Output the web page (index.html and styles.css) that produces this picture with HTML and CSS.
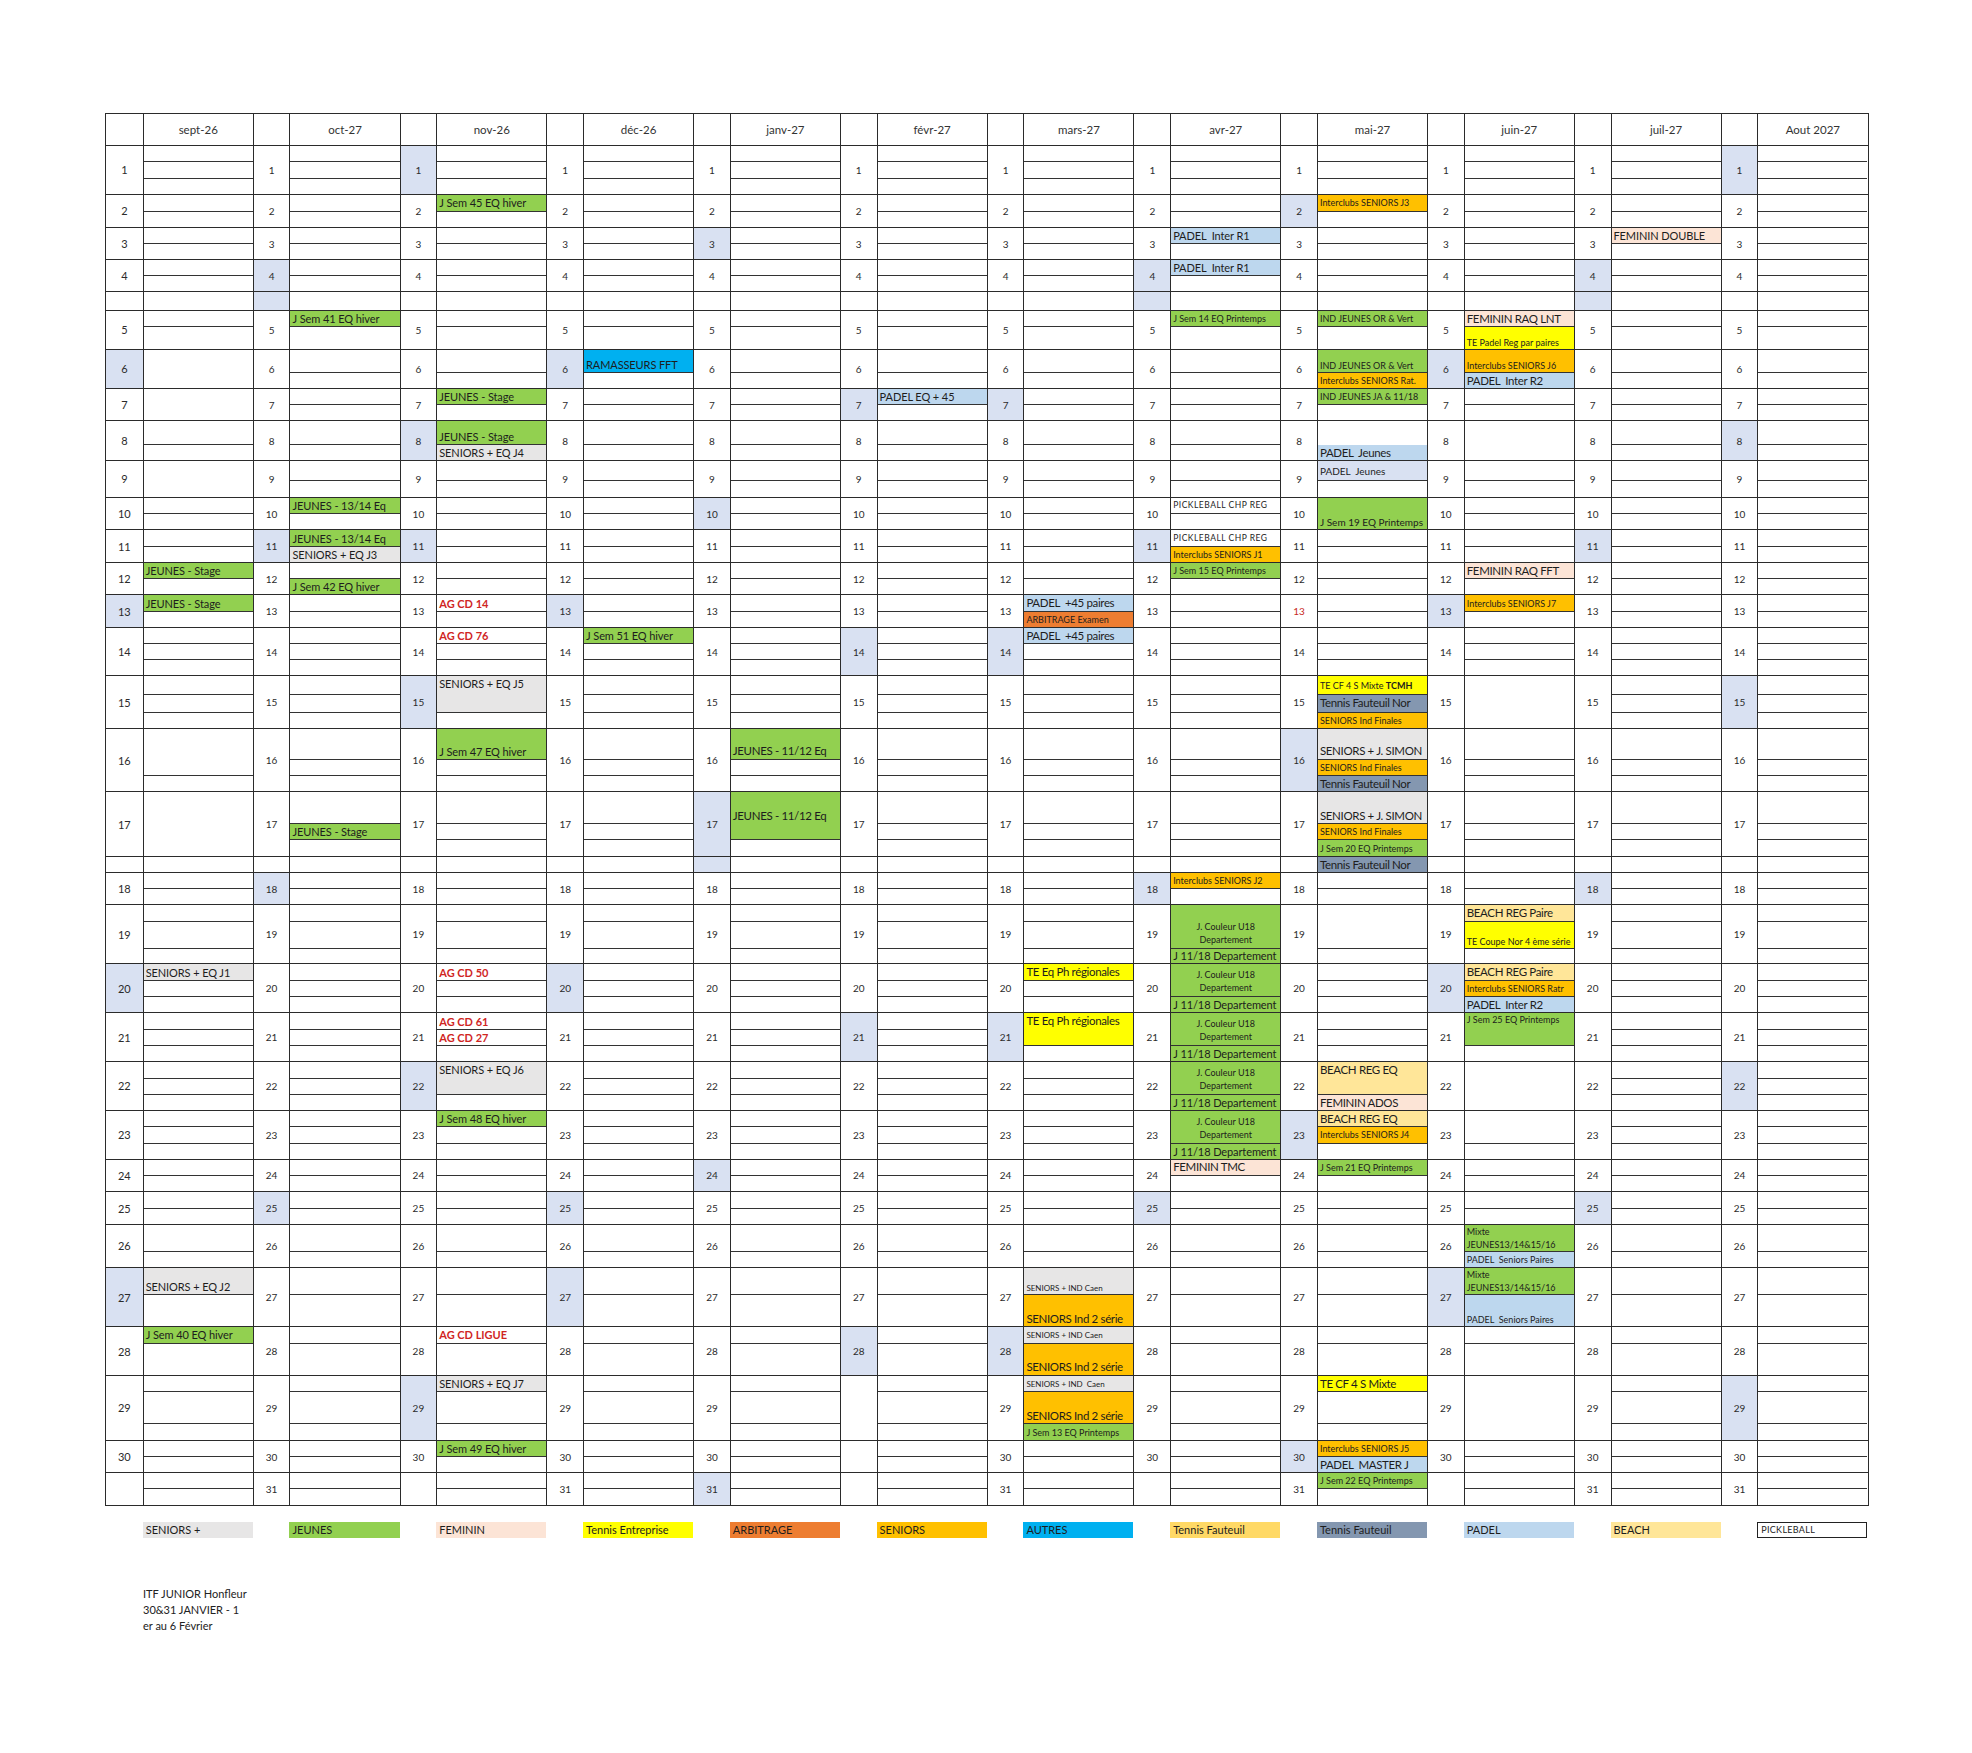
FILE: index.html
```html
<!DOCTYPE html>
<html lang="fr">
<head>
<meta charset="utf-8">
<title>Calendrier 2026-2027</title>
<link rel="stylesheet" href="styles.css">
</head>
<body>
<div class="sheet">
<div class="cal">
<div class="hdr">
<div class="h"></div><div class="h">sept-26</div><div class="h"></div><div class="h">oct-27</div><div class="h"></div><div class="h">nov-26</div><div class="h"></div><div class="h">déc-26</div><div class="h"></div><div class="h">janv-27</div><div class="h"></div><div class="h">févr-27</div><div class="h"></div><div class="h">mars-27</div><div class="h"></div><div class="h">avr-27</div><div class="h"></div><div class="h">mai-27</div><div class="h"></div><div class="h">juin-27</div><div class="h"></div><div class="h">juil-27</div><div class="h"></div><div class="h">Aout 2027</div>
</div>

<div class="row" style="--r:16.3px 16.3px 15px">
<div class="d">1</div><div class="e"><span></span><span></span><span></span></div>
<div class="d">1</div><div class="e"><span></span><span></span><span></span></div>
<div class="d su">1</div><div class="e"><span></span><span></span><span></span></div>
<div class="d">1</div><div class="e"><span></span><span></span><span></span></div>
<div class="d">1</div><div class="e"><span></span><span></span><span></span></div>
<div class="d">1</div><div class="e"><span></span><span></span><span></span></div>
<div class="d">1</div><div class="e"><span></span><span></span><span></span></div>
<div class="d">1</div><div class="e"><span></span><span></span><span></span></div>
<div class="d">1</div><div class="e"><span></span><span></span><span></span></div>
<div class="d">1</div><div class="e"><span></span><span></span><span></span></div>
<div class="d">1</div><div class="e"><span></span><span></span><span></span></div>
<div class="d su">1</div><div class="e"><span></span><span></span><span></span></div>
</div>

<div class="row" style="--r:17px 15px">
<div class="d">2</div><div class="e"><span></span><span></span></div>
<div class="d">2</div><div class="e"><span></span><span></span></div>
<div class="d">2</div><div class="e"><span class="jn">J Sem 45 EQ hiver</span><span></span></div>
<div class="d">2</div><div class="e"><span></span><span></span></div>
<div class="d">2</div><div class="e"><span></span><span></span></div>
<div class="d">2</div><div class="e"><span></span><span></span></div>
<div class="d">2</div><div class="e"><span></span><span></span></div>
<div class="d">2</div><div class="e"><span></span><span></span></div>
<div class="d su">2</div><div class="e"><span class="se sm">Interclubs SENIORS J3</span><span></span></div>
<div class="d">2</div><div class="e"><span></span><span></span></div>
<div class="d">2</div><div class="e"><span></span><span></span></div>
<div class="d">2</div><div class="e"><span></span><span></span></div>
</div>

<div class="row" style="--r:16.4px 15.3px">
<div class="d">3</div><div class="e"><span></span><span></span></div>
<div class="d">3</div><div class="e"><span></span><span></span></div>
<div class="d">3</div><div class="e"><span></span><span></span></div>
<div class="d">3</div><div class="e"><span></span><span></span></div>
<div class="d su">3</div><div class="e"><span></span><span></span></div>
<div class="d">3</div><div class="e"><span></span><span></span></div>
<div class="d">3</div><div class="e"><span></span><span></span></div>
<div class="d">3</div><div class="e"><span class="pa">PADEL&nbsp; Inter R1</span><span></span></div>
<div class="d">3</div><div class="e"><span></span><span></span></div>
<div class="d">3</div><div class="e"><span></span><span></span></div>
<div class="d">3</div><div class="e"><span class="fe">FEMININ DOUBLE</span><span></span></div>
<div class="d">3</div><div class="e"><span></span><span></span></div>
</div>

<div class="row" style="--r:15.7px 15.3px">
<div class="d">4</div><div class="e"><span></span><span></span></div>
<div class="d su">4</div><div class="e"><span></span><span></span></div>
<div class="d">4</div><div class="e"><span></span><span></span></div>
<div class="d">4</div><div class="e"><span></span><span></span></div>
<div class="d">4</div><div class="e"><span></span><span></span></div>
<div class="d">4</div><div class="e"><span></span><span></span></div>
<div class="d">4</div><div class="e"><span></span><span></span></div>
<div class="d su">4</div><div class="e"><span class="pa">PADEL&nbsp; Inter R1</span><span></span></div>
<div class="d">4</div><div class="e"><span></span><span></span></div>
<div class="d">4</div><div class="e"><span></span><span></span></div>
<div class="d su">4</div><div class="e"><span></span><span></span></div>
<div class="d">4</div><div class="e"><span></span><span></span></div>
</div>

<div class="row" style="--r:17.7px">
<div class="d"></div><div class="e"></div>
<div class="d su"></div><div class="e"></div>
<div class="d"></div><div class="e"></div>
<div class="d"></div><div class="e"></div>
<div class="d"></div><div class="e"></div>
<div class="d"></div><div class="e"></div>
<div class="d"></div><div class="e"></div>
<div class="d su"></div><div class="e"></div>
<div class="d"></div><div class="e"></div>
<div class="d"></div><div class="e"></div>
<div class="d su"></div><div class="e"></div>
<div class="d"></div><div class="e"></div>
</div>

<div class="row" style="--r:16.3px 21.3px">
<div class="d">5</div><div class="e"><span></span><span></span></div>
<div class="d">5</div><div class="e"><span class="jn">J Sem 41 EQ hiver</span><span></span></div>
<div class="d">5</div><div class="e"><span></span><span></span></div>
<div class="d">5</div><div class="e"><span></span><span></span></div>
<div class="d">5</div><div class="e"><span></span><span></span></div>
<div class="d">5</div><div class="e"><span></span><span></span></div>
<div class="d">5</div><div class="e"><span></span><span></span></div>
<div class="d">5</div><div class="e"><span class="jn sm">J Sem 14 EQ Printemps</span><span></span></div>
<div class="d">5</div><div class="e"><span class="jn sm">IND JEUNES OR &amp; Vert</span><span></span></div>
<div class="d">5</div><div class="e"><span class="fe lg">FEMININ RAQ LNT</span><span class="te sm bot">TE Padel Reg par paires</span></div>
<div class="d">5</div><div class="e"><span></span><span></span></div>
<div class="d">5</div><div class="e"><span></span><span></span></div>
</div>

<div class="row" style="--r:23.4px 15px">
<div class="d su">6</div><div class="e"><span class="nb"></span><span></span></div>
<div class="d">6</div><div class="e"><span></span><span></span></div>
<div class="d">6</div><div class="e"><span></span><span></span></div>
<div class="d su">6</div><div class="e"><span class="au bot">RAMASSEURS FFT</span><span></span></div>
<div class="d">6</div><div class="e"><span></span><span></span></div>
<div class="d">6</div><div class="e"><span></span><span></span></div>
<div class="d">6</div><div class="e"><span></span><span></span></div>
<div class="d">6</div><div class="e"><span></span><span></span></div>
<div class="d">6</div><div class="e"><span class="jn sm bot">IND JEUNES OR &amp; Vert</span><span class="se sm">Interclubs SENIORS Rat.</span></div>
<div class="d su">6</div><div class="e"><span class="se sm bot">Interclubs SENIORS J6</span><span class="pa lg">PADEL&nbsp; Inter R2</span></div>
<div class="d">6</div><div class="e"><span></span><span></span></div>
<div class="d">6</div><div class="e"><span></span><span></span></div>
</div>

<div class="row" style="--r:16.3px 15px">
<div class="d">7</div><div class="e"><span class="nb"></span><span></span></div>
<div class="d">7</div><div class="e"><span></span><span></span></div>
<div class="d">7</div><div class="e"><span class="jn">JEUNES - Stage</span><span></span></div>
<div class="d">7</div><div class="e"><span></span><span></span></div>
<div class="d">7</div><div class="e"><span></span><span></span></div>
<div class="d su">7</div><div class="e"><span class="pa">PADEL EQ + 45</span><span></span></div>
<div class="d su">7</div><div class="e"><span></span><span></span></div>
<div class="d">7</div><div class="e"><span></span><span></span></div>
<div class="d">7</div><div class="e"><span class="jn sm">IND JEUNES JA &amp; 11/18</span><span></span></div>
<div class="d">7</div><div class="e"><span></span><span></span></div>
<div class="d">7</div><div class="e"><span></span><span></span></div>
<div class="d">7</div><div class="e"><span></span><span></span></div>
</div>

<div class="row" style="--r:23.7px 15px">
<div class="d">8</div><div class="e"><span></span><span></span></div>
<div class="d">8</div><div class="e"><span></span><span></span></div>
<div class="d su">8</div><div class="e"><span class="jn bot">JEUNES - Stage</span><span class="sp">SENIORS + EQ J4</span></div>
<div class="d">8</div><div class="e"><span></span><span></span></div>
<div class="d">8</div><div class="e"><span></span><span></span></div>
<div class="d">8</div><div class="e"><span></span><span></span></div>
<div class="d">8</div><div class="e"><span></span><span></span></div>
<div class="d">8</div><div class="e"><span></span><span></span></div>
<div class="d">8</div><div class="e"><span class="nb"></span><span class="pa lg">PADEL&nbsp; Jeunes</span></div>
<div class="d">8</div><div class="e"><span class="nb"></span><span></span></div>
<div class="d">8</div><div class="e"><span></span><span></span></div>
<div class="d su">8</div><div class="e"><span></span><span></span></div>
</div>

<div class="row" style="--r:20px 15.6px">
<div class="d">9</div><div class="e"><span class="nb"></span><span></span></div>
<div class="d">9</div><div class="e"><span></span><span></span></div>
<div class="d">9</div><div class="e"><span></span><span></span></div>
<div class="d">9</div><div class="e"><span></span><span></span></div>
<div class="d">9</div><div class="e"><span></span><span></span></div>
<div class="d">9</div><div class="e"><span></span><span></span></div>
<div class="d">9</div><div class="e"><span></span><span></span></div>
<div class="d">9</div><div class="e"><span></span><span></span></div>
<div class="d">9</div><div class="e"><span class="pl md">PADEL&nbsp; Jeunes</span><span></span></div>
<div class="d">9</div><div class="e"><span></span><span></span></div>
<div class="d">9</div><div class="e"><span></span><span></span></div>
<div class="d">9</div><div class="e"><span></span><span></span></div>
</div>

<div class="row" style="--r:16.4px 15.3px">
<div class="d">10</div><div class="e"><span></span><span></span></div>
<div class="d">10</div><div class="e"><span class="jn">JEUNES - 13/14 Eq</span><span></span></div>
<div class="d">10</div><div class="e"><span></span><span></span></div>
<div class="d">10</div><div class="e"><span></span><span></span></div>
<div class="d su">10</div><div class="e"><span></span><span></span></div>
<div class="d">10</div><div class="e"><span></span><span></span></div>
<div class="d">10</div><div class="e"><span></span><span></span></div>
<div class="d">10</div><div class="e"><span class="pk">PICKLEBALL CHP REG</span><span></span></div>
<div class="d">10</div><div class="e"><span class="jn md s2 bot">J Sem 19 EQ Printemps</span></div>
<div class="d">10</div><div class="e"><span></span><span></span></div>
<div class="d">10</div><div class="e"><span></span><span></span></div>
<div class="d">10</div><div class="e"><span></span><span></span></div>
</div>

<div class="row" style="--r:16.3px 15px">
<div class="d">11</div><div class="e"><span></span><span></span></div>
<div class="d su">11</div><div class="e"><span class="jn">JEUNES - 13/14 Eq</span><span class="sp">SENIORS + EQ J3</span></div>
<div class="d su">11</div><div class="e"><span></span><span></span></div>
<div class="d">11</div><div class="e"><span></span><span></span></div>
<div class="d">11</div><div class="e"><span></span><span></span></div>
<div class="d">11</div><div class="e"><span></span><span></span></div>
<div class="d">11</div><div class="e"><span></span><span></span></div>
<div class="d su">11</div><div class="e"><span class="pk">PICKLEBALL CHP REG</span><span class="se sm">Interclubs SENIORS J1</span></div>
<div class="d">11</div><div class="e"><span></span><span></span></div>
<div class="d">11</div><div class="e"><span></span><span></span></div>
<div class="d su">11</div><div class="e"><span></span><span></span></div>
<div class="d">11</div><div class="e"><span></span><span></span></div>
</div>

<div class="row" style="--r:16.4px 15.3px">
<div class="d">12</div><div class="e"><span class="jn">JEUNES - Stage</span><span></span></div>
<div class="d">12</div><div class="e"><span></span><span class="jn">J Sem 42 EQ hiver</span></div>
<div class="d">12</div><div class="e"><span></span><span></span></div>
<div class="d">12</div><div class="e"><span></span><span></span></div>
<div class="d">12</div><div class="e"><span></span><span></span></div>
<div class="d">12</div><div class="e"><span></span><span></span></div>
<div class="d">12</div><div class="e"><span></span><span></span></div>
<div class="d">12</div><div class="e"><span class="jn sm">J Sem 15 EQ Printemps</span><span></span></div>
<div class="d">12</div><div class="e"><span></span><span></span></div>
<div class="d">12</div><div class="e"><span class="fe lg">FEMININ RAQ FFT</span><span></span></div>
<div class="d">12</div><div class="e"><span></span><span></span></div>
<div class="d">12</div><div class="e"><span></span><span></span></div>
</div>

<div class="row" style="--r:16.3px 15.4px">
<div class="d su">13</div><div class="e"><span class="jn">JEUNES - Stage</span><span></span></div>
<div class="d">13</div><div class="e"><span></span><span></span></div>
<div class="d">13</div><div class="e"><span class="ag">AG CD 14</span><span></span></div>
<div class="d su">13</div><div class="e"><span></span><span></span></div>
<div class="d">13</div><div class="e"><span></span><span></span></div>
<div class="d">13</div><div class="e"><span></span><span></span></div>
<div class="d">13</div><div class="e"><span class="pa lg">PADEL&nbsp; +45 paires</span><span class="ar sm">ARBITRAGE Examen</span></div>
<div class="d">13</div><div class="e"><span></span><span></span></div>
<div class="d red">13</div><div class="e"><span></span><span></span></div>
<div class="d su">13</div><div class="e"><span class="se sm">Interclubs SENIORS J7</span><span></span></div>
<div class="d">13</div><div class="e"><span></span><span></span></div>
<div class="d">13</div><div class="e"><span></span><span></span></div>
</div>

<div class="row" style="--r:16px 16.3px 15px">
<div class="d">14</div><div class="e"><span></span><span></span><span></span></div>
<div class="d">14</div><div class="e"><span></span><span></span><span></span></div>
<div class="d">14</div><div class="e"><span class="ag">AG CD 76</span><span></span><span></span></div>
<div class="d">14</div><div class="e"><span class="jn">J Sem 51 EQ hiver</span><span></span><span></span></div>
<div class="d">14</div><div class="e"><span></span><span></span><span></span></div>
<div class="d su">14</div><div class="e"><span></span><span></span><span></span></div>
<div class="d su">14</div><div class="e"><span class="pa lg">PADEL&nbsp; +45 paires</span><span></span><span></span></div>
<div class="d">14</div><div class="e"><span></span><span></span><span></span></div>
<div class="d">14</div><div class="e"><span></span><span></span><span></span></div>
<div class="d">14</div><div class="e"><span></span><span></span><span></span></div>
<div class="d">14</div><div class="e"><span></span><span></span><span></span></div>
<div class="d">14</div><div class="e"><span></span><span></span><span></span></div>
</div>

<div class="row" style="--r:18.3px 18px 15.7px">
<div class="d">15</div><div class="e"><span></span><span></span><span></span></div>
<div class="d">15</div><div class="e"><span></span><span></span><span></span></div>
<div class="d su">15</div><div class="e"><span class="sp s2 top">SENIORS + EQ J5</span><span></span></div>
<div class="d">15</div><div class="e"><span></span><span></span><span></span></div>
<div class="d">15</div><div class="e"><span></span><span></span><span></span></div>
<div class="d">15</div><div class="e"><span></span><span></span><span></span></div>
<div class="d">15</div><div class="e"><span></span><span></span><span></span></div>
<div class="d">15</div><div class="e"><span></span><span></span><span></span></div>
<div class="d">15</div><div class="e"><span class="te sm">TE CF 4 S Mixte&nbsp;<b>TCMH</b></span><span class="tfn lg">Tennis Fauteuil Nor</span><span class="se sm">SENIORS Ind Finales</span></div>
<div class="d">15</div><div class="e"><span class="nb"></span><span class="nb"></span><span></span></div>
<div class="d">15</div><div class="e"><span></span><span></span><span></span></div>
<div class="d su">15</div><div class="e"><span></span><span></span><span></span></div>
</div>

<div class="row" style="--r:30.3px 16px 15.4px">
<div class="d">16</div><div class="e"><span class="nb"></span><span></span><span></span></div>
<div class="d">16</div><div class="e"><span></span><span></span><span></span></div>
<div class="d">16</div><div class="e"><span class="jn bot">J Sem 47 EQ hiver</span><span></span><span></span></div>
<div class="d">16</div><div class="e"><span></span><span></span><span></span></div>
<div class="d">16</div><div class="e"><span class="jn lg bot">JEUNES - 11/12 Eq</span><span></span><span></span></div>
<div class="d">16</div><div class="e"><span></span><span></span><span></span></div>
<div class="d">16</div><div class="e"><span></span><span></span><span></span></div>
<div class="d">16</div><div class="e"><span></span><span></span><span></span></div>
<div class="d su">16</div><div class="e"><span class="sp lg bot">SENIORS + J. SIMON</span><span class="se sm">SENIORS Ind Finales</span><span class="tfn lg">Tennis Fauteuil Nor</span></div>
<div class="d">16</div><div class="e"><span></span><span></span><span></span></div>
<div class="d">16</div><div class="e"><span></span><span></span><span></span></div>
<div class="d">16</div><div class="e"><span></span><span></span><span></span></div>
</div>

<div class="row" style="--r:32.3px 16px 15.7px">
<div class="d">17</div><div class="e"><span class="nb"></span><span class="nb"></span><span></span></div>
<div class="d">17</div><div class="e"><span></span><span class="jn">JEUNES - Stage</span><span></span></div>
<div class="d">17</div><div class="e"><span></span><span></span><span></span></div>
<div class="d">17</div><div class="e"><span></span><span></span><span></span></div>
<div class="d su">17</div><div class="e"><span class="jn lg s2">JEUNES - 11/12 Eq</span><span></span></div>
<div class="d">17</div><div class="e"><span></span><span></span><span></span></div>
<div class="d">17</div><div class="e"><span></span><span></span><span></span></div>
<div class="d">17</div><div class="e"><span></span><span></span><span></span></div>
<div class="d">17</div><div class="e"><span class="sp lg bot">SENIORS + J. SIMON</span><span class="se sm">SENIORS Ind Finales</span><span class="jn sm">J Sem 20 EQ Printemps</span></div>
<div class="d">17</div><div class="e"><span></span><span></span><span></span></div>
<div class="d">17</div><div class="e"><span></span><span></span><span></span></div>
<div class="d">17</div><div class="e"><span></span><span></span><span></span></div>
</div>

<div class="row" style="--r:15px">
<div class="d"></div><div class="e"></div>
<div class="d"></div><div class="e"></div>
<div class="d"></div><div class="e"></div>
<div class="d"></div><div class="e"></div>
<div class="d su"></div><div class="e"></div>
<div class="d"></div><div class="e"></div>
<div class="d"></div><div class="e"></div>
<div class="d"></div><div class="e"></div>
<div class="d"></div><div class="e"><span class="tfn lg">Tennis Fauteuil Nor</span></div>
<div class="d"></div><div class="e"></div>
<div class="d"></div><div class="e"></div>
<div class="d"></div><div class="e"></div>
</div>

<div class="row" style="--r:16.3px 15px">
<div class="d">18</div><div class="e"><span></span><span></span></div>
<div class="d su">18</div><div class="e"><span></span><span></span></div>
<div class="d">18</div><div class="e"><span></span><span></span></div>
<div class="d">18</div><div class="e"><span></span><span></span></div>
<div class="d">18</div><div class="e"><span></span><span></span></div>
<div class="d">18</div><div class="e"><span></span><span></span></div>
<div class="d">18</div><div class="e"><span></span><span></span></div>
<div class="d su">18</div><div class="e"><span class="se sm">Interclubs SENIORS J2</span><span></span></div>
<div class="d">18</div><div class="e"><span></span><span></span></div>
<div class="d">18</div><div class="e"><span></span><span></span></div>
<div class="d su">18</div><div class="e"><span></span><span></span></div>
<div class="d">18</div><div class="e"><span></span><span></span></div>
</div>

<div class="row" style="--r:16.3px 27px 14.7px">
<div class="d">19</div><div class="e"><span></span><span></span><span></span></div>
<div class="d">19</div><div class="e"><span></span><span></span><span></span></div>
<div class="d">19</div><div class="e"><span></span><span></span><span></span></div>
<div class="d">19</div><div class="e"><span></span><span></span><span></span></div>
<div class="d">19</div><div class="e"><span></span><span></span><span></span></div>
<div class="d">19</div><div class="e"><span></span><span></span><span></span></div>
<div class="d">19</div><div class="e"><span></span><span></span><span></span></div>
<div class="d">19</div><div class="e"><span class="jn sm s2 two ctr bot">J. Couleur U18<br>Departement</span><span class="jn">J 11/18 Departement</span></div>
<div class="d">19</div><div class="e"><span class="nb"></span><span></span><span></span></div>
<div class="d">19</div><div class="e"><span class="be lg">BEACH REG Paire</span><span class="te sm bot">TE Coupe Nor 4 ème série</span><span></span></div>
<div class="d">19</div><div class="e"><span></span><span></span><span></span></div>
<div class="d">19</div><div class="e"><span></span><span></span><span></span></div>
</div>

<div class="row" style="--r:16.7px 16.3px 15px">
<div class="d su">20</div><div class="e"><span class="sp">SENIORS + EQ J1</span><span></span><span></span></div>
<div class="d">20</div><div class="e"><span></span><span></span><span></span></div>
<div class="d">20</div><div class="e"><span class="ag">AG CD 50</span><span></span><span></span></div>
<div class="d su">20</div><div class="e"><span></span><span></span><span></span></div>
<div class="d">20</div><div class="e"><span></span><span></span><span></span></div>
<div class="d">20</div><div class="e"><span></span><span></span><span></span></div>
<div class="d">20</div><div class="e"><span class="te lg">TE Eq Ph régionales</span><span></span><span></span></div>
<div class="d">20</div><div class="e"><span class="jn sm s2 two ctr bot">J. Couleur U18<br>Departement</span><span class="jn">J 11/18 Departement</span></div>
<div class="d">20</div><div class="e"><span></span><span></span><span></span></div>
<div class="d su">20</div><div class="e"><span class="be lg">BEACH REG Paire</span><span class="se sm">Interclubs SENIORS Ratr</span><span class="pa lg">PADEL&nbsp; Inter R2</span></div>
<div class="d">20</div><div class="e"><span></span><span></span><span></span></div>
<div class="d">20</div><div class="e"><span></span><span></span><span></span></div>
</div>

<div class="row" style="--r:17px 16px 14.7px">
<div class="d">21</div><div class="e"><span></span><span></span><span></span></div>
<div class="d">21</div><div class="e"><span></span><span></span><span></span></div>
<div class="d">21</div><div class="e"><span class="ag">AG CD 61</span><span class="ag">AG CD 27</span><span></span></div>
<div class="d">21</div><div class="e"><span></span><span></span><span></span></div>
<div class="d">21</div><div class="e"><span></span><span></span><span></span></div>
<div class="d su">21</div><div class="e"><span></span><span></span><span></span></div>
<div class="d su">21</div><div class="e"><span class="te lg s2 top">TE Eq Ph régionales</span><span></span></div>
<div class="d">21</div><div class="e"><span class="jn sm s2 two ctr bot">J. Couleur U18<br>Departement</span><span class="jn">J 11/18 Departement</span></div>
<div class="d">21</div><div class="e"><span></span><span></span><span></span></div>
<div class="d">21</div><div class="e"><span class="jn sm s2 top">J Sem 25 EQ Printemps</span><span></span></div>
<div class="d">21</div><div class="e"><span></span><span></span><span></span></div>
<div class="d">21</div><div class="e"><span></span><span></span><span></span></div>
</div>

<div class="row" style="--r:16.6px 16.4px 14.6px">
<div class="d">22</div><div class="e"><span></span><span></span><span></span></div>
<div class="d">22</div><div class="e"><span></span><span></span><span></span></div>
<div class="d su">22</div><div class="e"><span class="sp s2 top">SENIORS + EQ J6</span><span></span></div>
<div class="d">22</div><div class="e"><span></span><span></span><span></span></div>
<div class="d">22</div><div class="e"><span></span><span></span><span></span></div>
<div class="d">22</div><div class="e"><span></span><span></span><span></span></div>
<div class="d">22</div><div class="e"><span></span><span></span><span></span></div>
<div class="d">22</div><div class="e"><span class="jn sm s2 two ctr bot">J. Couleur U18<br>Departement</span><span class="jn">J 11/18 Departement</span></div>
<div class="d">22</div><div class="e"><span class="be lg s2 top">BEACH REG EQ</span><span class="fe lg">FEMININ ADOS</span></div>
<div class="d">22</div><div class="e"><span class="nb"></span><span class="nb"></span><span></span></div>
<div class="d">22</div><div class="e"><span></span><span></span><span></span></div>
<div class="d su">22</div><div class="e"><span></span><span></span><span></span></div>
</div>

<div class="row" style="--r:16.7px 16.3px 15px">
<div class="d">23</div><div class="e"><span></span><span></span><span></span></div>
<div class="d">23</div><div class="e"><span></span><span></span><span></span></div>
<div class="d">23</div><div class="e"><span class="jn">J Sem 48 EQ hiver</span><span></span><span></span></div>
<div class="d">23</div><div class="e"><span></span><span></span><span></span></div>
<div class="d">23</div><div class="e"><span></span><span></span><span></span></div>
<div class="d">23</div><div class="e"><span></span><span></span><span></span></div>
<div class="d">23</div><div class="e"><span></span><span></span><span></span></div>
<div class="d">23</div><div class="e"><span class="jn sm s2 two ctr bot">J. Couleur U18<br>Departement</span><span class="jn">J 11/18 Departement</span></div>
<div class="d su">23</div><div class="e"><span class="be lg">BEACH REG EQ</span><span class="se sm">Interclubs SENIORS J4</span><span></span></div>
<div class="d">23</div><div class="e"><span class="nb"></span><span></span><span></span></div>
<div class="d">23</div><div class="e"><span></span><span></span><span></span></div>
<div class="d">23</div><div class="e"><span></span><span></span><span></span></div>
</div>

<div class="row" style="--r:16.4px 15.3px">
<div class="d">24</div><div class="e"><span></span><span></span></div>
<div class="d">24</div><div class="e"><span></span><span></span></div>
<div class="d">24</div><div class="e"><span></span><span></span></div>
<div class="d">24</div><div class="e"><span></span><span></span></div>
<div class="d su">24</div><div class="e"><span></span><span></span></div>
<div class="d">24</div><div class="e"><span></span><span></span></div>
<div class="d">24</div><div class="e"><span></span><span></span></div>
<div class="d">24</div><div class="e"><span class="fe lg">FEMININ TMC</span><span></span></div>
<div class="d">24</div><div class="e"><span class="jn sm">J Sem 21 EQ Printemps</span><span></span></div>
<div class="d">24</div><div class="e"><span></span><span></span></div>
<div class="d">24</div><div class="e"><span></span><span></span></div>
<div class="d">24</div><div class="e"><span></span><span></span></div>
</div>

<div class="row" style="--r:16.3px 15.4px">
<div class="d">25</div><div class="e"><span></span><span></span></div>
<div class="d su">25</div><div class="e"><span></span><span></span></div>
<div class="d">25</div><div class="e"><span></span><span></span></div>
<div class="d su">25</div><div class="e"><span></span><span></span></div>
<div class="d">25</div><div class="e"><span></span><span></span></div>
<div class="d">25</div><div class="e"><span></span><span></span></div>
<div class="d">25</div><div class="e"><span></span><span></span></div>
<div class="d su">25</div><div class="e"><span></span><span></span></div>
<div class="d">25</div><div class="e"><span></span><span></span></div>
<div class="d">25</div><div class="e"><span></span><span></span></div>
<div class="d su">25</div><div class="e"><span></span><span></span></div>
<div class="d">25</div><div class="e"><span></span><span></span></div>
</div>

<div class="row" style="--r:27px 15px">
<div class="d">26</div><div class="e"><span></span><span></span></div>
<div class="d">26</div><div class="e"><span></span><span></span></div>
<div class="d">26</div><div class="e"><span></span><span></span></div>
<div class="d">26</div><div class="e"><span></span><span></span></div>
<div class="d">26</div><div class="e"><span></span><span></span></div>
<div class="d">26</div><div class="e"><span></span><span></span></div>
<div class="d">26</div><div class="e"><span></span><span></span></div>
<div class="d">26</div><div class="e"><span></span><span></span></div>
<div class="d">26</div><div class="e"><span></span><span></span></div>
<div class="d">26</div><div class="e"><span class="jn sm two">Mixte<br>JEUNES13/14&amp;15/16</span><span class="pa sm">PADEL&nbsp; Seniors Paires</span></div>
<div class="d">26</div><div class="e"><span></span><span></span></div>
<div class="d">26</div><div class="e"><span></span><span></span></div>
</div>

<div class="row" style="--r:27px 31.3px">
<div class="d su">27</div><div class="e"><span class="sp bot">SENIORS + EQ J2</span><span></span></div>
<div class="d">27</div><div class="e"><span></span><span></span></div>
<div class="d">27</div><div class="e"><span></span><span></span></div>
<div class="d su">27</div><div class="e"><span></span><span></span></div>
<div class="d">27</div><div class="e"><span></span><span></span></div>
<div class="d">27</div><div class="e"><span></span><span></span></div>
<div class="d">27</div><div class="e"><span class="sp xs bot">SENIORS + IND Caen</span><span class="se lg bot">SENIORS Ind 2 série</span></div>
<div class="d">27</div><div class="e"><span></span><span></span></div>
<div class="d">27</div><div class="e"><span></span><span></span></div>
<div class="d su">27</div><div class="e"><span class="jn sm two">Mixte<br>JEUNES13/14&amp;15/16</span><span class="pa sm bot">PADEL&nbsp; Seniors Paires</span></div>
<div class="d">27</div><div class="e"><span></span><span></span></div>
<div class="d">27</div><div class="e"><span></span><span></span></div>
</div>

<div class="row" style="--r:16.3px 31.4px">
<div class="d">28</div><div class="e"><span class="jn">J Sem 40 EQ hiver</span><span></span></div>
<div class="d">28</div><div class="e"><span></span><span></span></div>
<div class="d">28</div><div class="e"><span class="ag">AG CD LIGUE</span><span></span></div>
<div class="d">28</div><div class="e"><span></span><span></span></div>
<div class="d">28</div><div class="e"><span></span><span></span></div>
<div class="d su">28</div><div class="e"><span></span><span></span></div>
<div class="d su">28</div><div class="e"><span class="sp xs">SENIORS + IND Caen</span><span class="se lg bot">SENIORS Ind 2 série</span></div>
<div class="d">28</div><div class="e"><span></span><span></span></div>
<div class="d">28</div><div class="e"><span></span><span></span></div>
<div class="d">28</div><div class="e"><span></span><span></span></div>
<div class="d">28</div><div class="e"><span></span><span></span></div>
<div class="d">28</div><div class="e"><span></span><span></span></div>
</div>

<div class="row" style="--r:16.3px 32.3px 15.4px">
<div class="d">29</div><div class="e"><span></span><span></span><span></span></div>
<div class="d">29</div><div class="e"><span></span><span></span><span></span></div>
<div class="d su">29</div><div class="e"><span class="sp">SENIORS + EQ J7</span><span></span><span></span></div>
<div class="d">29</div><div class="e"><span></span><span></span><span></span></div>
<div class="d">29</div><div class="e"><span></span><span></span><span></span></div>
<div class="d"></div><div class="e"><span></span><span></span><span></span></div>
<div class="d">29</div><div class="e"><span class="sp xs">SENIORS + IND&nbsp; Caen</span><span class="se lg bot">SENIORS Ind 2 série</span><span class="jn sm">J Sem 13 EQ Printemps</span></div>
<div class="d">29</div><div class="e"><span></span><span></span><span></span></div>
<div class="d">29</div><div class="e"><span class="te lg">TE CF 4 S Mixte</span><span></span><span></span></div>
<div class="d">29</div><div class="e"><span class="nb"></span><span class="nb"></span><span></span></div>
<div class="d">29</div><div class="e"><span></span><span></span><span></span></div>
<div class="d su">29</div><div class="e"><span></span><span></span><span></span></div>
</div>

<div class="row" style="--r:16.3px 15.3px">
<div class="d">30</div><div class="e"><span></span><span></span></div>
<div class="d">30</div><div class="e"><span></span><span></span></div>
<div class="d">30</div><div class="e"><span class="jn">J Sem 49 EQ hiver</span><span></span></div>
<div class="d">30</div><div class="e"><span></span><span></span></div>
<div class="d">30</div><div class="e"><span></span><span></span></div>
<div class="d"></div><div class="e"><span></span><span></span></div>
<div class="d">30</div><div class="e"><span></span><span></span></div>
<div class="d">30</div><div class="e"><span></span><span></span></div>
<div class="d su">30</div><div class="e"><span class="se sm">Interclubs SENIORS J5</span><span class="pa lg">PADEL&nbsp; MASTER J</span></div>
<div class="d">30</div><div class="e"><span></span><span></span></div>
<div class="d">30</div><div class="e"><span></span><span></span></div>
<div class="d">30</div><div class="e"><span></span><span></span></div>
</div>

<div class="row" style="--r:16px 15.4px">
<div class="d"></div><div class="e"><span></span><span></span></div>
<div class="d">31</div><div class="e"><span></span><span></span></div>
<div class="d"></div><div class="e"><span></span><span></span></div>
<div class="d">31</div><div class="e"><span></span><span></span></div>
<div class="d su">31</div><div class="e"><span></span><span></span></div>
<div class="d"></div><div class="e"><span></span><span></span></div>
<div class="d">31</div><div class="e"><span></span><span></span></div>
<div class="d"></div><div class="e"><span></span><span></span></div>
<div class="d">31</div><div class="e"><span class="jn sm">J Sem 22 EQ Printemps</span><span></span></div>
<div class="d"></div><div class="e"><span></span><span></span></div>
<div class="d">31</div><div class="e"><span></span><span></span></div>
<div class="d">31</div><div class="e"><span></span><span></span></div>
</div>
</div>

<div class="legend">
<div class="key sp">SENIORS +</div>
<div class="key jn">JEUNES</div>
<div class="key fe">FEMININ</div>
<div class="key te">Tennis Entreprise</div>
<div class="key ar">ARBITRAGE</div>
<div class="key se">SENIORS</div>
<div class="key au">AUTRES</div>
<div class="key tf">Tennis Fauteuil</div>
<div class="key tfn">Tennis Fauteuil</div>
<div class="key pa">PADEL</div>
<div class="key be">BEACH</div>
<div class="key pkl">PICKLEBALL</div>
</div>

<div class="note">
<p>ITF JUNIOR Honfleur</p>
<p>30&amp;31 JANVIER - 1</p>
<p>er au 6 Février</p>
</div>
</div>
</body>
</html>
```

FILE: styles.css
```css
* { box-sizing: border-box; }
html, body { margin: 0; background: #ffffff; }
body {
  font-family: Lato, "Liberation Sans", sans-serif;
  color: #1d1d1d;
}
.sheet { padding: 113px 0 0 105px; }

.cal {
  width: 1763.6px;
  border: 1px solid #2b2b2b;
  border-bottom: 0;
}
.hdr, .row {
  display: grid;
  grid-template-columns: repeat(12, 36.7px 110.1px);
  border-bottom: 1px solid #2b2b2b;
}
.hdr { height: 32.2px; }
.h {
  border-left: 1px solid #2b2b2b;
  display: flex;
  align-items: center;
  justify-content: center;
  font-size: 11.5px;
  color: #333;
}
.h:first-child, .d:first-child { border-left: 0; }

.d {
  border-left: 1px solid #2b2b2b;
  display: flex;
  align-items: center;
  justify-content: center;
  font-size: 10px;
  color: #2b2b2b;
}
.row > .d:first-child { font-size: 11px; }
.su { background: #d9e1f2; }
.d.red { color: #c8281e; }

.e {
  border-left: 1px solid #2b2b2b;
  display: grid;
  grid-template-rows: var(--r);
  min-width: 0;
}
.e > span {
  display: flex;
  align-items: center;
  min-height: 0;
  border-bottom: 1px solid #333;
  padding: 0 2px;
  font-size: 11px;
  letter-spacing: -0.1px;
  line-height: 1;
  white-space: nowrap;
  overflow: hidden;
}
.e > span:last-child, .e > span.nb { border-bottom: 0; }
.e > .s2 { grid-row: span 2; }
.e > .top { align-items: flex-start; padding-top: 2px; }
.e > .bot { align-items: flex-end; padding-bottom: 2px; }
.e > .ctr { justify-content: center; text-align: center; }
.e > .two { white-space: normal; line-height: 13px; }

.e > .xs { font-size: 8px; letter-spacing: 0; }
.e > .sm { font-size: 9px; letter-spacing: 0; }
.e > .md { font-size: 10px; letter-spacing: 0; }
.e > .lg { font-size: 11.5px; letter-spacing: -0.35px; }

.e > .ag { color: #d0261f; font-weight: 700; font-size: 11px; letter-spacing: 0; }
.e > .pk { font-size: 8.5px; letter-spacing: 0.5px; }

.sp { background: #e7e6e6; }
.jn { background: #92d050; }
.fe { background: #fce4d6; }
.te { background: #ffff00; }
.ar { background: #ed7d31; }
.se { background: #ffc000; }
.au { background: #00b0f0; }
.tf { background: #ffd966; }
.tfn { background: #8497b0; }
.pa { background: #bdd7ee; }
.pl { background: #d9e1f2; }
.be { background: #ffe699; }

.legend {
  display: grid;
  grid-template-columns: repeat(12, 110.1px);
  column-gap: 36.7px;
  padding-left: 37.7px;
  margin-top: 16px;
}
.key {
  height: 16px;
  display: flex;
  align-items: center;
  padding-left: 3px;
  font-size: 11px;
  white-space: nowrap;
}
.key.pkl {
  border: 1px solid #222;
  font-size: 9px;
  letter-spacing: 0.3px;
}

.note {
  margin: 48px 0 0 38px;
  font-size: 11px;
  line-height: 16.3px;
  color: #222;
}
.note p { margin: 0; }
```
